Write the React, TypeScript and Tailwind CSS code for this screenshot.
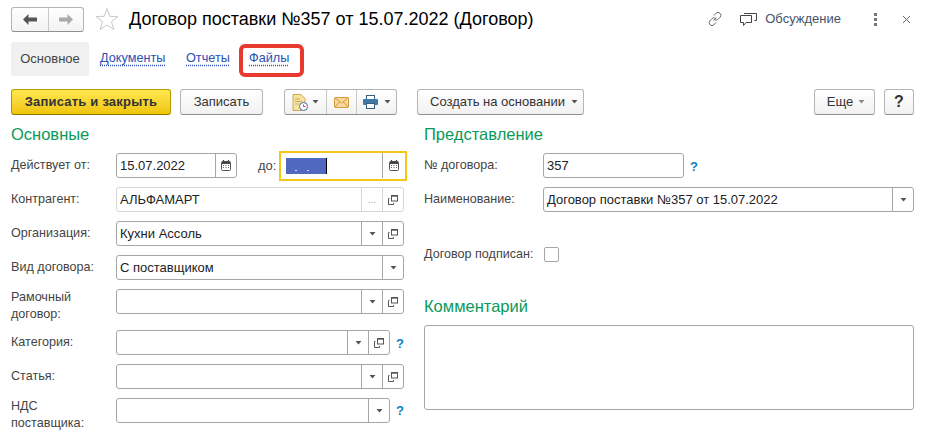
import type { ReactNode } from 'react';

const Caret = ({ className = 'text-[#555]' }: { className?: string }) => (
  <svg width="7" height="4" viewBox="0 0 7 4" className={className}>
    <path d="M.5 0h6L3.500 3.500z" fill="currentColor" />
  </svg>
);

const CalendarIcon = () => (
  <svg width="10" height="11" viewBox="0 0 10 11">
    <path d="M2.500 0v2M7.500 0v2" stroke="#444" strokeWidth="1.200" />
    <rect x="0.500" y="1.500" width="9" height="9" rx="1" fill="none" stroke="#555" />
    <path d="M1 1.500h8V4H1z" fill="#444" />
    <path d="M2 5h1v1H2zM4.500 5h1v1h-1zM7 5h1v1H7zM2 7h1v1H2zM4.500 7h1v1h-1zM7 7h1v1H7z" fill="#666" />
  </svg>
);

const OpenIcon = () => (
  <svg width="10" height="10" viewBox="0 0 10 10" fill="none" stroke="#555">
    <rect x="3.500" y="0.500" width="6" height="5.500" />
    <path d="M3.500 1h6" strokeWidth="1.400" />
    <path d="M1.500 3.500H.5v6h5V8" />
  </svg>
);

const Trigger = ({ w, children, disabled }: { w: string; children: ReactNode; disabled?: boolean }) => (
  <div className={`${w} h-full flex items-center justify-center border-l shrink-0 ${disabled ? 'border-[#d6d6d6]' : 'border-[#a6a6a6]'}`}>
    {children}
  </div>
);

const Field = ({
  w = 'w-[288px]',
  text,
  caret,
  open,
  calendar,
  dots,
  disabled,
}: {
  w?: string;
  text?: string;
  caret?: boolean;
  open?: boolean;
  calendar?: boolean;
  dots?: boolean;
  disabled?: boolean;
}) => (
  <div className={`${w} h-[25px] shrink-0 flex items-center bg-white border rounded-[3px] ${disabled ? 'border-[#d6d6d6]' : 'border-[#a6a6a6]'}`}>
    <div className="flex-1 pl-[3px] text-[13px] text-[#222] truncate">{text}</div>
    {dots && (
      <Trigger w="w-[21px]" disabled>
        <span className="text-[#aaa] text-[10px] leading-none">...</span>
      </Trigger>
    )}
    {caret && (
      <Trigger w="w-[21px]">
        <Caret />
      </Trigger>
    )}
    {calendar && (
      <Trigger w="w-[21px]">
        <CalendarIcon />
      </Trigger>
    )}
    {open && (
      <Trigger w="w-[21px]" disabled={disabled}>
        <OpenIcon />
      </Trigger>
    )}
  </div>
);

const Hint = () => <span className="text-[#0b7fc4] font-bold text-[13px] leading-none">?</span>;

const Row = ({ label, children, top, className = '' }: { label: ReactNode; children: ReactNode; top?: boolean; className?: string }) => (
  <div className={`flex ${top ? 'items-start' : 'items-center'} ${className}`}>
    <div className="w-[105px] shrink-0 text-[12.6px] leading-[17px] text-[#444]">{label}</div>
    {children}
  </div>
);

const Btn = ({ children, className = '', primary }: { children: ReactNode; className?: string; primary?: boolean }) => (
  <div
    className={`h-[26px] flex items-center justify-center rounded-[3px] border bg-gradient-to-b text-[13px] text-[#333] ${
      primary ? 'border-[#b39a00] border-b-[#8f7a00] from-[#ffe84d] to-[#efc400]' : 'border-[#b5b5b5] border-b-[#8f8f8f] from-white to-[#f1f1f1]'
    } ${className}`}
  >
    {children}
  </div>
);

const Link = ({ children }: { children: ReactNode }) => (
  <span className="text-[#2a50b4] underline decoration-dotted underline-offset-2">{children}</span>
);

export default function App() {
  return (
    <div className="w-[931px] h-[430px] overflow-hidden bg-white font-['Liberation_Sans',Arial,sans-serif]">
      {/* Шапка */}
      <div className="flex items-center h-[38px] pl-[11px] pr-[20px]">
        <div className="flex h-[25px] w-[73px] rounded-[3px] border border-[#b5b5b5] border-b-[#8f8f8f] bg-gradient-to-b from-white to-[#f3f3f3]">
          <div className="w-[37px] flex items-center justify-center border-r border-[#c8c8c8]">
            <svg width="14" height="11" viewBox="0 0 14 11"><path d="M0 5.500L5.500 0v3.500H14v4H5.500V11z" fill="#555" /></svg>
          </div>
          <div className="flex-1 flex items-center justify-center">
            <svg width="14" height="11" viewBox="0 0 14 11"><path d="M14 5.500L8.500 0v3.500H0v4h8.500V11z" fill="#aaa" /></svg>
          </div>
        </div>
        <svg width="24" height="24" viewBox="0 0 24 24" className="ml-[11px]">
          <path d="M12 1.500l2.800 7.800 8.200.3-6.500 5 2.300 7.900-6.800-4.600-6.800 4.600 2.300-7.900L1 9.600l8.200-.3z" fill="none" stroke="#c8c8c8" />
        </svg>
        <h1 className="ml-[10px] text-[18px] text-black font-normal">Договор поставки №357 от 15.07.2022 (Договор)</h1>
        <div className="ml-auto flex items-center">
          <svg width="16" height="16" viewBox="0 0 16 16" fill="none" stroke="#666" strokeWidth="1">
            <path d="M6.500 9.500l3-3M7 4.500l2-2.200a2.800 2.800 0 0 1 4 4l-2.200 2.200a2.800 2.800 0 0 1-3 .4M9 11.500l-2 2.200a2.800 2.800 0 0 1-4-4l2.200-2.200a2.800 2.800 0 0 1 3-.4" />
          </svg>
          <svg width="17" height="15" viewBox="0 0 17 15" fill="none" stroke="#444" className="ml-[17px]">
            <path d="M.5 3.500h11v7H6l-2.500 3v-3h-3z" />
            <path d="M4 1.500h12.500v7h-2" />
          </svg>
          <span className="ml-[8px] text-[13px] text-[#44546a]">Обсуждение</span>
          <svg width="3" height="13" viewBox="0 0 3 13" className="ml-[33px]">
            <path d="M0 0h3v3H0zM0 5h3v3H0zM0 10h3v3H0z" fill="#777" />
          </svg>
          <svg width="9" height="9" viewBox="0 0 9 9" className="ml-[25px]" stroke="#666" fill="none">
            <path d="M1 1l7 7M8 1L1 8" />
          </svg>
        </div>
      </div>

      {/* Вкладки */}
      <div className="flex items-center h-[34px] mt-[4px] pl-[11px] text-[12.700px]">
        <div className="w-[78px] h-[34px] flex items-center justify-center bg-[#f0f0f0] rounded-[3px] text-[#444] text-[13px]">Основное</div>
        <span className="ml-[11px] w-[66px] whitespace-nowrap"><Link>Документы</Link></span>
        <span className="ml-[20px] w-[43px] whitespace-nowrap"><Link>Отчеты</Link></span>
        <div className="ml-[10px] mt-[3px] w-[65px] h-[33px] flex items-center pl-[6px] pb-[3px] border-[4px] border-[#e8392e] rounded-[6px]">
          <Link>Файлы</Link>
        </div>
      </div>

      {/* Панель команд */}
      <div className="flex items-center mt-[13px] pl-[11px] pr-[17px]">
        <Btn primary className="w-[160px] font-bold tracking-[0.2px]">Записать и закрыть</Btn>
        <Btn className="w-[83px] ml-[9px] text-[12.600px]">Записать</Btn>
        <div className="flex ml-[21px] h-[26px] w-[113px] rounded-[3px] border border-[#b5b5b5] border-b-[#8f8f8f] bg-gradient-to-b from-white to-[#f1f1f1]">
          <div className="w-[42px] flex items-center justify-center gap-[4px] border-r border-[#c8c8c8]">
            <svg width="16" height="17" viewBox="0 0 16 17">
              <path d="M1 .500h8l4 4v12H1z" fill="#f6e3a0" stroke="#c9a956" />
              <path d="M3 5h5M3 7.500h7M3 10h4" stroke="#c9a956" />
              <circle cx="11.500" cy="12.500" r="4" fill="#fff" stroke="#4a6fa5" />
              <path d="M11.500 10.500v2h2" stroke="#d04040" fill="none" />
            </svg>
            <Caret />
          </div>
          <div className="w-[30px] flex items-center justify-center border-r border-[#c8c8c8]">
            <svg width="15" height="11" viewBox="0 0 15 11">
              <rect x=".5" y=".5" width="14" height="10" rx="1" fill="#f7d79a" stroke="#d39a3e" />
              <path d="M1 1l6.500 5L14 1M1 10l4.500-5M14 10L9.500 5" stroke="#d39a3e" fill="none" />
            </svg>
          </div>
          <div className="flex-1 flex items-center justify-center gap-[6px]">
            <svg width="15" height="14" viewBox="0 0 15 14">
              <rect x="3.500" y=".5" width="8" height="4" fill="#fff" stroke="#37607f" />
              <rect x="0" y="4" width="15" height="6" rx="1" fill="#3f7aa6" />
              <rect x="3.500" y="8.500" width="8" height="5" fill="#fff" stroke="#37607f" />
            </svg>
            <Caret />
          </div>
        </div>
        <Btn className="w-[167px] ml-[20px] gap-[6px] pl-[7px]">
          Создать на основании
          <Caret />
        </Btn>
        <Btn className="w-[61px] ml-auto gap-[5px] pl-[3px]">
          Еще
          <Caret className="text-[#888]" />
        </Btn>
        <Btn className="w-[30px] ml-[9px] font-bold text-[16px] text-[#222]">?</Btn>
      </div>

      {/* Форма */}
      <div className="flex mt-[9px] pl-[11px]">
        <div className="w-[413px] shrink-0">
          <h2 className="text-[16.500px] leading-[20px] text-[#0a9a5a] font-normal">Основные</h2>
          <div className="flex flex-col mt-[9px]">
            <Row label="Действует от:">
              <div className="flex items-center w-[288px]">
                <Field w="w-[121px]" text="15.07.2022" calendar />
                <span className="ml-[21px] text-[13px] text-[#444]">до:</span>
                <div className="ml-auto -mr-[3px] -my-[3px] w-[128px] h-[30px] flex items-center border-[2px] border-[#f5c518] pl-[5px]">
                  <div className="w-[41px] h-[16px] flex items-end gap-[10px] pl-[9px] pb-[3px] bg-[#5068c0] border-r border-black">
                    <span className="w-[2px] h-[1px] bg-[#dde]" />
                    <span className="w-[2px] h-[1px] bg-[#dde]" />
                  </div>
                  <div className="ml-auto w-[23px] h-[25px] flex items-center justify-center border-l border-[#a6a6a6]">
                    <CalendarIcon />
                  </div>
                </div>
              </div>
            </Row>
            <Row label="Контрагент:" className="mt-[9px]">
              <Field text="АЛЬФАМАРТ" dots open disabled />
            </Row>
            <Row label="Организация:" className="mt-[9px]">
              <Field text="Кухни Ассоль" caret open />
            </Row>
            <Row label="Вид договора:" className="mt-[9px]">
              <Field text="С поставщиком" caret />
            </Row>
            <Row top label={<>Рамочный<br />договор:</>} className="mt-[9px]">
              <Field caret open />
            </Row>
            <Row label="Категория:" className="mt-[7px]">
              <Field w="w-[274px]" caret open />
              <span className="ml-[6px]"><Hint /></span>
            </Row>
            <Row label="Статья:" className="mt-[9px]">
              <Field caret open />
            </Row>
            <Row top label={<>НДС<br />поставщика:</>} className="mt-[9px]">
              <Field w="w-[274px]" caret />
              <span className="ml-[6px]"><Hint /></span>
            </Row>
          </div>
        </div>

        <div className="w-[490px] shrink-0">
          <h2 className="text-[16.500px] leading-[20px] text-[#0a9a5a] font-normal">Представление</h2>
          <div className="flex flex-col mt-[9px]">
            <div className="flex items-center">
              <div className="w-[119px] text-[12.600px] text-[#444]">№ договора:</div>
              <Field w="w-[141px]" text="357" />
              <span className="ml-[6px]"><Hint /></span>
            </div>
            <div className="flex items-center mt-[9px]">
              <div className="w-[119px] text-[12.600px] text-[#444]">Наименование:</div>
              <Field w="w-[371px]" text="Договор поставки №357 от 15.07.2022" caret />
            </div>
            <div className="flex items-center mt-[33px]">
              <div className="w-[120px] text-[12.600px] text-[#444]">Договор подписан:</div>
              <div className="w-[15px] h-[15px] border border-[#a6a6a6] rounded-[2px]" />
            </div>
          </div>
          <h2 className="mt-[32px] text-[16.500px] leading-[20px] text-[#0a9a5a] font-normal">Комментарий</h2>
          <div className="mt-[9px] w-[490px] h-[85px] border border-[#a6a6a6] rounded-[3px]" />
        </div>
      </div>
    </div>
  );
}
